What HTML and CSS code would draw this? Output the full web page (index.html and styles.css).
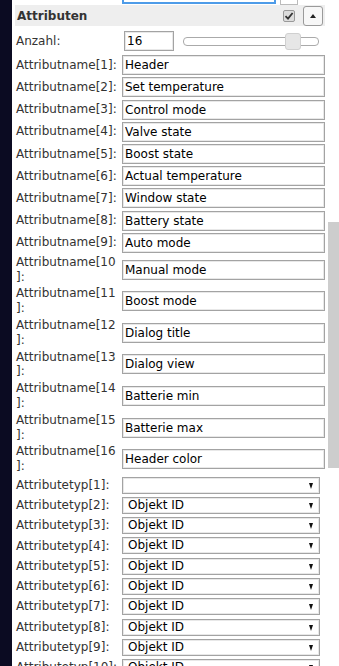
FILE: index.html
```html
<!DOCTYPE html>
<html lang="de">
<head>
  <meta charset="UTF-8" />
  <meta name="viewport" content="width=device-width, initial-scale=1.0"/>
  <title>Attribute</title>
  <link rel="stylesheet" href="styles.css">
</head>
<body>
  <div class="sidebar"></div>

  <div class="panel">
    <!-- Rest der vorigen Zeile, oben abgeschnitten -->
    <div class="top-row">
      <div class="top-input"></div>
      <div class="top-btn"></div>
    </div>

    <div class="section-head">
      <span class="section-title">Attributen</span>
      <span class="check">
        <svg width="10" height="10" viewBox="0 0 10 10"><path d="M1.5 5.2 L4 7.6 L8.6 2" fill="none" stroke="#333" stroke-width="1.8"/></svg>
      </span>
      <button class="collapse-btn"><span class="tri-up"></span></button>
    </div>

    <table class="attr-table">
      <tr class="count-tr">
        <td class="label">Anzahl:</td>
        <td class="field">
          <div class="count-row">
            <input class="text count" type="text" value="16">
            <div class="slider"><div class="slider-handle"></div></div>
          </div>
        </td>
      </tr>
      <tr><td class="label">Attributname[1]:</td><td class="field"><input class="text" type="text" value="Header"></td></tr>
      <tr><td class="label">Attributname[2]:</td><td class="field"><input class="text" type="text" value="Set temperature"></td></tr>
      <tr><td class="label">Attributname[3]:</td><td class="field"><input class="text" type="text" value="Control mode"></td></tr>
      <tr><td class="label">Attributname[4]:</td><td class="field"><input class="text" type="text" value="Valve state"></td></tr>
      <tr><td class="label">Attributname[5]:</td><td class="field"><input class="text" type="text" value="Boost state"></td></tr>
      <tr><td class="label">Attributname[6]:</td><td class="field"><input class="text" type="text" value="Actual temperature"></td></tr>
      <tr><td class="label">Attributname[7]:</td><td class="field"><input class="text" type="text" value="Window state"></td></tr>
      <tr><td class="label">Attributname[8]:</td><td class="field"><input class="text" type="text" value="Battery state"></td></tr>
      <tr><td class="label">Attributname[9]:</td><td class="field"><input class="text" type="text" value="Auto mode"></td></tr>
      <tr><td class="label">Attributname[10]:</td><td class="field"><input class="text" type="text" value="Manual mode"></td></tr>
      <tr><td class="label">Attributname[11]:</td><td class="field"><input class="text" type="text" value="Boost mode"></td></tr>
      <tr><td class="label">Attributname[12]:</td><td class="field"><input class="text" type="text" value="Dialog title"></td></tr>
      <tr><td class="label">Attributname[13]:</td><td class="field"><input class="text" type="text" value="Dialog view"></td></tr>
      <tr><td class="label">Attributname[14]:</td><td class="field"><input class="text" type="text" value="Batterie min"></td></tr>
      <tr><td class="label">Attributname[15]:</td><td class="field"><input class="text" type="text" value="Batterie max"></td></tr>
      <tr><td class="label">Attributname[16]:</td><td class="field"><input class="text" type="text" value="Header color"></td></tr>

      <tr class="sel-tr"><td class="label">Attributetyp[1]:</td><td class="field"><div class="select"><select><option></option><option>Objekt ID</option></select></div></td></tr>
      <tr class="sel-tr"><td class="label">Attributetyp[2]:</td><td class="field"><div class="select"><select><option>Objekt ID</option></select></div></td></tr>
      <tr class="sel-tr"><td class="label">Attributetyp[3]:</td><td class="field"><div class="select"><select><option>Objekt ID</option></select></div></td></tr>
      <tr class="sel-tr"><td class="label">Attributetyp[4]:</td><td class="field"><div class="select"><select><option>Objekt ID</option></select></div></td></tr>
      <tr class="sel-tr"><td class="label">Attributetyp[5]:</td><td class="field"><div class="select"><select><option>Objekt ID</option></select></div></td></tr>
      <tr class="sel-tr"><td class="label">Attributetyp[6]:</td><td class="field"><div class="select"><select><option>Objekt ID</option></select></div></td></tr>
      <tr class="sel-tr"><td class="label">Attributetyp[7]:</td><td class="field"><div class="select"><select><option>Objekt ID</option></select></div></td></tr>
      <tr class="sel-tr"><td class="label">Attributetyp[8]:</td><td class="field"><div class="select"><select><option>Objekt ID</option></select></div></td></tr>
      <tr class="sel-tr"><td class="label">Attributetyp[9]:</td><td class="field"><div class="select"><select><option>Objekt ID</option></select></div></td></tr>
      <tr class="sel-tr"><td class="label">Attributetyp[10]:</td><td class="field"><div class="select"><select><option>Objekt ID</option></select></div></td></tr>
    </table>
  </div>

  <!-- Scrollbalken -->
  <div class="scrollbar"><div class="scrollbar-thumb"></div></div>
</body>
</html>
```

FILE: styles.css
```css
* {
  box-sizing: border-box;
}

html, body {
  margin: 0;
  height: 100%;
  overflow: hidden;
}

body {
  display: flex;
  font-family: "DejaVu Sans", Verdana, sans-serif;
  font-size: 12px;
  color: #333;
  background: #fff;
}

.sidebar {
  width: 12px;
  flex-shrink: 0;
  background-color: #0b0b22;
}

.panel {
  flex: 1;
  min-width: 0;
  padding: 0 3px;
}

.scrollbar {
  width: 11px;
  flex-shrink: 0;
  background: #fff;
}

.scrollbar-thumb {
  margin-top: 222px;
  height: 246px;
  background-color: #cdcdcd;
}

/* abgeschnittene Zeile oben */
.top-row {
  display: flex;
  align-items: flex-start;
  height: 5px;
  margin-left: 107px;
}

.top-input {
  width: 154px;
  height: 4px;
  border: 2px solid #4d9be8;
  border-top: 0;
}

.top-btn {
  width: 18px;
  height: 5px;
  margin-left: 4px;
  border: 1px solid #bbb;
  border-top: 0;
}

/* Abschnittskopf */
.section-head {
  display: flex;
  align-items: center;
  height: 21px;
  padding: 0 2px;
  background-color: #eeeeee;
  font-weight: bold;
}

.section-title {
  flex: 1;
}

.check {
  width: 12px;
  height: 12px;
  margin-right: 8px;
  border: 1px solid #999;
  border-radius: 2px;
  background-color: #dcdcdc;
  display: flex;
  align-items: center;
  justify-content: center;
}

.collapse-btn {
  width: 20px;
  height: 20px;
  padding: 0;
  border: 1px solid #9a9a9a;
  border-radius: 3px;
  background-color: #f7f7f7;
  display: flex;
  align-items: center;
  justify-content: center;
}

.tri-up {
  width: 0;
  height: 0;
  border-left: 3.5px solid transparent;
  border-right: 3.5px solid transparent;
  border-bottom: 4px solid #222;
}

/* Tabelle */
.attr-table {
  width: 100%;
  margin-top: 4px;
  border-spacing: 0;
  table-layout: fixed;
}

.attr-table td {
  box-sizing: content-box;
  padding: 1.1px 0;
}

.attr-table td.label {
  width: 102px;
  padding: 1.1px 4px 1.1px 1px;
  line-height: 14.7px;
  overflow-wrap: anywhere;
  color: #333;
}

.attr-table .count-tr td {
  padding-bottom: 3px;
}

.attr-table .sel-tr td {
  padding-top: 1.65px;
  padding-bottom: 1.65px;
}

.text {
  display: block;
  width: 100%;
  height: 20px;
  margin: 0;
  padding: 0 2px;
  border: 1px solid #a3a3a3;
  box-shadow: inset 0 0 0 1px #e8e8e8;
  font: inherit;
  color: #000;
  background: #fff;
  outline: none;
}

.count-row {
  display: flex;
  align-items: center;
}

.count {
  width: 50px;
  margin-left: 2px;
}

.slider {
  position: relative;
  width: 136px;
  height: 9px;
  margin-left: 9px;
  border: 1px solid #aaa;
  border-radius: 4px;
  background: #fff;
}

.slider-handle {
  position: absolute;
  left: 101px;
  top: -5px;
  width: 16px;
  height: 17px;
  border: 1px solid #d0d0d0;
  border-radius: 3px;
  background-color: #e6e6e6;
}

.select {
  position: relative;
  width: 198px;
}

.select select {
  display: block;
  width: 100%;
  height: 17px;
  margin: 0;
  padding: 0 0 0 5px;
  border: 1px solid #a3a3a3;
  box-shadow: inset 0 0 0 1px #e8e8e8;
  border-radius: 0;
  appearance: none;
  -webkit-appearance: none;
  font: inherit;
  line-height: 15px;
  color: #000;
  background: #fff;
  outline: none;
}

.select::after {
  content: "";
  position: absolute;
  right: 7px;
  top: 6px;
  border-left: 2.5px solid transparent;
  border-right: 2.5px solid transparent;
  border-top: 6px solid #111;
}
```
